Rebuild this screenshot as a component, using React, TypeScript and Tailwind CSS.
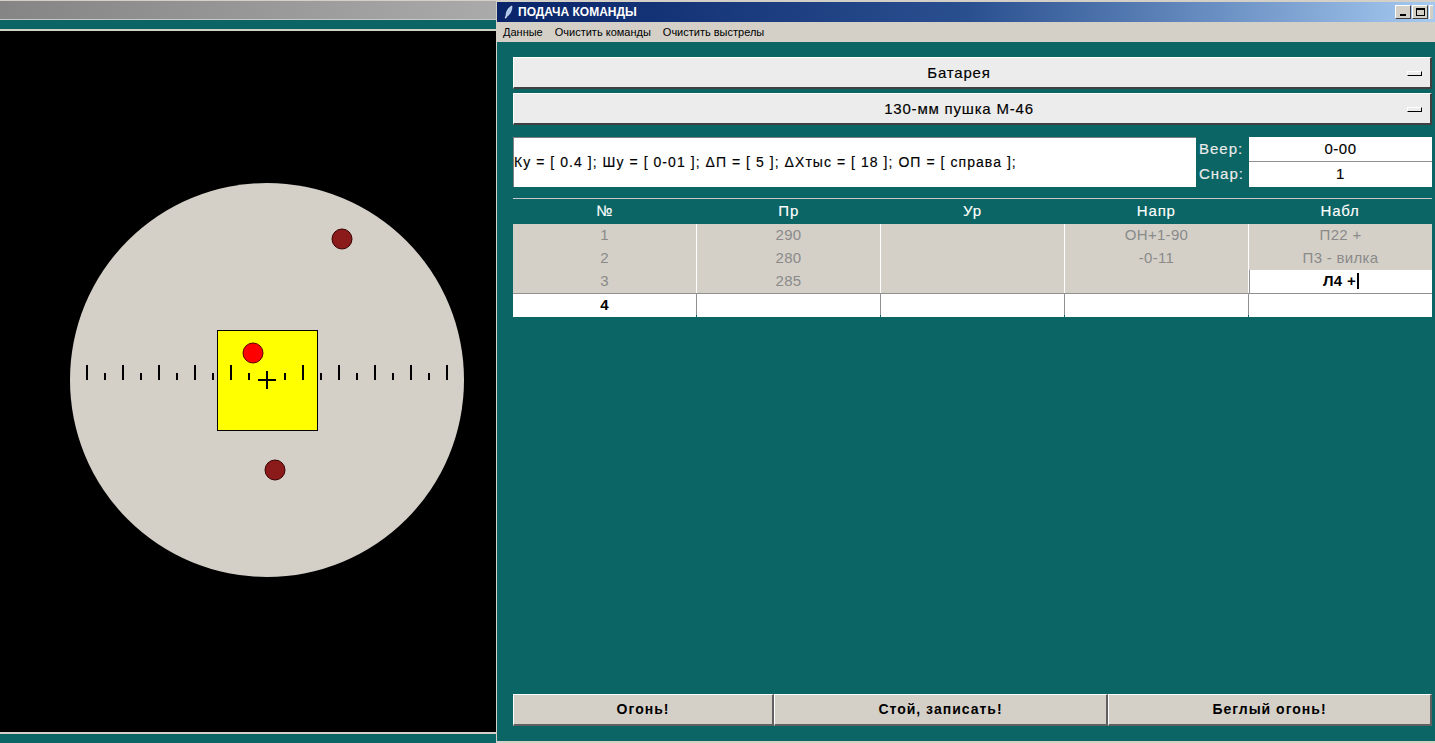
import React from 'react';

const rows = [
  { n: '1', pr: '290', ur: '', napr: 'ОН+1-90', nabl: 'П22 +' },
  { n: '2', pr: '280', ur: '', napr: '-0-11', nabl: 'П3 - вилка' },
  { n: '3', pr: '285', ur: '', napr: '', nabl: 'Л4 +' },
];

const longTicks = [87, 123, 159, 195, 231, 303, 339, 375, 411, 447];
const shortTicks = [105, 141, 177, 213, 249, 285, 321, 357, 393, 429];

const Scope: React.FC = () => (
  <svg width="495" height="700" viewBox="0 31 495 700" className="block">
    <circle cx="267" cy="380" r="197" fill="#d4d0c8" />
    <rect x="217.5" y="330.5" width="100" height="100" fill="#ffff00" stroke="#000" strokeWidth="1" />
    {longTicks.map((x) => (
      <line key={x} x1={x} y1="365" x2={x} y2="380" stroke="#000" strokeWidth="2" />
    ))}
    {shortTicks.map((x) => (
      <line key={x} x1={x} y1="373" x2={x} y2="380" stroke="#000" strokeWidth="2" />
    ))}
    <line x1="258" y1="380" x2="276" y2="380" stroke="#000" strokeWidth="2" />
    <line x1="267" y1="371" x2="267" y2="389" stroke="#000" strokeWidth="2" />
    <circle cx="253" cy="353" r="10" fill="#ff0000" stroke="#5a0000" strokeWidth="1" />
    <circle cx="342" cy="239" r="10" fill="#8b1a1a" stroke="#3a0000" strokeWidth="1" />
    <circle cx="275" cy="470" r="10" fill="#8b1a1a" stroke="#3a0000" strokeWidth="1" />
  </svg>
);

const Combo: React.FC<{ label: string }> = ({ label }) => (
  <div className="relative h-[32px] bg-[#ececec] border-t border-l border-t-white border-l-white border-r-2 border-b-2 border-r-[#404040] border-b-[#404040] flex items-center justify-center pr-[26px] pt-[2px] text-[15px] tracking-[0.8px] text-black [-webkit-text-stroke:0.15px_black]">
    {label}
    <div className="absolute right-[8px] top-[13px] w-[15px] h-[5px] bg-[#ececec] border-t border-l border-t-white border-l-white border-r border-b border-r-black border-b-black" />
  </div>
);

const btn =
  'bg-[#d4d0c8] border-t border-l border-white border-r-2 border-b-2 border-r-[#606060] border-b-[#606060] tracking-[1px]';

const App: React.FC = () => {
  return (
    <div className="w-[1435px] h-[743px] flex overflow-hidden bg-[#0b6565]" style={{ fontFamily: '"Liberation Sans", Arial, sans-serif' }}>
      {/* left window */}
      <div className="w-[496px] h-full flex flex-col">
        <div className="h-[19px] bg-gradient-to-r from-[#858585] to-[#aaaaaa] border-t border-[#d4d0c8]" />
        <div className="h-px bg-[#c8c8c8]" />
        <div className="h-[9px] bg-[#0b6565]" />
        <div className="h-[2px] bg-[#d4d0c8]" />
        <div className="flex-1 bg-black overflow-hidden">
          <Scope />
        </div>
        <div className="h-[2px] bg-[#d4d0c8]" />
        <div className="h-[9px] bg-[#0b6565]" />
      </div>

      {/* right window */}
      <div className="flex-1 h-full flex flex-col border-l border-[#d4d0c8]">
        <div className="h-[2px] bg-[#d4d0c8]" />
        <div className="h-[20px] flex items-center bg-gradient-to-r from-[#0a246a] via-[#2a4f8f] to-[#a6caf0] pl-[7px] pr-[2px]">
          <svg width="9" height="14" viewBox="0 0 9 14" className="mr-[5px]">
            <path d="M8 1 C5 2 2 6 2 11 L1 13 L2 13 L3 11 C6 10 8 5 8 1 Z" fill="#a8c8f0" stroke="#ffffff" strokeWidth="0.6" />
          </svg>
          <span className="text-white font-bold text-[12px]">ПОДАЧА КОМАНДЫ</span>
          <div className="ml-auto flex gap-[1px]">
            <div className="w-[16px] h-[14px] bg-[#d4d0c8] border-t border-l border-white border-r border-b border-r-[#404040] border-b-[#404040] flex items-end justify-center pb-[2px]">
              <div className="w-[6px] h-[2px] bg-black" />
            </div>
            <div className="w-[16px] h-[14px] bg-[#d4d0c8] border-t border-l border-white border-r border-b border-r-[#404040] border-b-[#404040] flex items-center justify-center">
              <div className="w-[9px] h-[8px] border border-black border-t-2" />
            </div>
            <div className="w-[4px] h-[14px] bg-[#d4d0c8] border-t border-l border-white" />
          </div>
        </div>
        <div className="h-[20px] bg-[#d4d0c8] flex items-center text-[11px] text-black pl-[6px] gap-[12px]">
          <span>Данные</span>
          <span>Очистить команды</span>
          <span>Очистить выстрелы</span>
        </div>

        <div className="flex-1 flex flex-col pl-[16px] pr-[3px] pt-[15px] pb-[15px] border-b-2 border-[#d4d0c8]">
          <Combo label="Батарея" />
          <div className="h-[4px]" />
          <Combo label="130-мм пушка М-46" />

          <div className="mt-[12px] h-[50px] flex">
            <div className="w-[683px] bg-white border-l border-t border-[#808080] flex items-center text-[14px] tracking-[1.05px] text-black whitespace-nowrap [-webkit-text-stroke:0.15px_black]">
              Ку = [ 0.4 ]; Шу = [ 0-01 ]; ΔП = [ 5 ]; ΔXтыс = [ 18 ]; ОП = [ справа ];
            </div>
            <div className="w-[53px] flex flex-col text-[15px] tracking-[1px] text-[#ececec] pl-[3px] [-webkit-text-stroke:0.15px_#ececec]">
              <div className="h-[25px] flex items-center">Веер:</div>
              <div className="h-[25px] flex items-center">Снар:</div>
            </div>
            <div className="flex-1 flex flex-col bg-white text-[15px] tracking-[0.5px] text-black [-webkit-text-stroke:0.15px_black]">
              <div className="h-[25px] flex items-center justify-center border-b border-[#909090]">0-00</div>
              <div className="h-[24px] flex items-center justify-center">1</div>
            </div>
          </div>

          <div className="mt-[11px] h-px bg-[#c8c8c8]" />
          <div className="grid grid-cols-5 h-[25px] text-[15px] tracking-[0.8px] text-white items-center text-center [-webkit-text-stroke:0.15px_white]">
            <div>№</div>
            <div>Пр</div>
            <div>Ур</div>
            <div>Напр</div>
            <div>Набл</div>
          </div>
          <div className="flex flex-col gap-px bg-white">
            {rows.map((r, i) => (
              <div key={r.n} className="grid grid-cols-5 gap-px h-[22px] text-[15px] tracking-[0.3px] text-center">
                <div className="bg-[#d4d0c8] text-[#8a8a8a] flex items-center justify-center">{r.n}</div>
                <div className="bg-[#d4d0c8] text-[#8a8a8a] flex items-center justify-center">{r.pr}</div>
                <div className="bg-[#d4d0c8] text-[#8a8a8a] flex items-center justify-center">{r.ur}</div>
                <div className="bg-[#d4d0c8] text-[#8a8a8a] flex items-center justify-center">{r.napr}</div>
                {i === 2 ? (
                  <div className="bg-white border-l border-[#909090] text-black font-bold flex items-center justify-center">
                    {r.nabl}
                    <span className="inline-block w-[2px] h-[16px] bg-black ml-[1px]" />
                  </div>
                ) : (
                  <div className="bg-[#d4d0c8] text-[#8a8a8a] flex items-center justify-center">{r.nabl}</div>
                )}
              </div>
            ))}
            <div className="grid grid-cols-5 gap-px h-[22px] text-[15px] text-center bg-[#909090] border-t border-[#909090]">
              <div className="bg-white text-black font-bold flex items-center justify-center">4</div>
              <div className="bg-white" />
              <div className="bg-white" />
              <div className="bg-white" />
              <div className="bg-white" />
            </div>
          </div>

          <div className="flex-1" />

          <div className="h-[32px] flex text-[14px] font-bold text-black">
            <button className={`w-[261px] ${btn}`}>Огонь!</button>
            <button className={`w-[334px] ${btn}`}>Стой, записать!</button>
            <button className={`flex-1 ${btn}`}>Беглый огонь!</button>
          </div>
        </div>
      </div>
    </div>
  );
};

export default App;
